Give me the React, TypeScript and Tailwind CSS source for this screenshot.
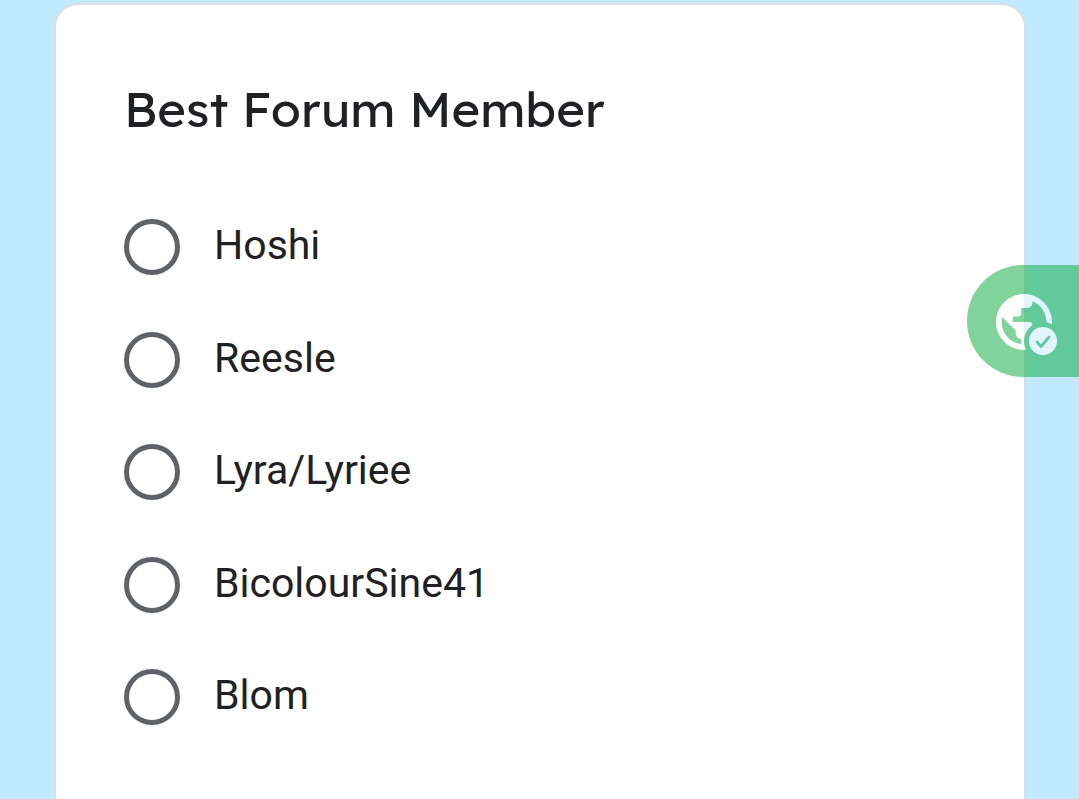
import { useState } from 'react';

const members = ['Hoshi', 'Reesle', 'Lyra/Lyriee', 'BicolourSine41', 'Blom'];

function GlobeCheckIcon() {
  return (
    <svg viewBox="0 0 112 112" className="size-28" aria-hidden="true">
      <mask id="badge-gap">
        <rect width="112" height="112" fill="white" />
        <circle cx="76" cy="76" r="19" fill="black" />
      </mask>
      <g mask="url(#badge-gap)">
        <path
          transform="translate(23.4 23.4) scale(2.8)"
          fill="white"
          d="M12 2C6.48 2 2 6.48 2 12s4.48 10 10 10 10-4.48 10-10S17.52 2 12 2zm-1 17.93c-3.95-.49-7-3.85-7-7.93 0-.62.08-1.21.21-1.79L9 15v1c0 1.1.9 2 2 2v1.93zm6.9-2.54c-.26-.81-1-1.39-1.9-1.39h-1v-3c0-.55-.45-1-1-1H8v-2h2c.55 0 1-.45 1-1V7h2c1.1 0 2-.9 2-2v-.41c2.93 1.19 5 4.06 5 7.41 0 2.08-.8 3.97-2.1 5.39z"
        />
      </g>
      <circle cx="76" cy="76" r="14" fill="white" />
      <path
        d="M70 77l4 4.5 8-9.5"
        fill="none"
        stroke="#14ae46"
        strokeWidth="2.8"
        strokeLinecap="round"
        strokeLinejoin="round"
      />
    </svg>
  );
}

export default function App() {
  const [choice, setChoice] = useState('');

  return (
    <div className="flex h-screen flex-col overflow-hidden bg-[#c1e9ff] pt-[3px] pr-[53px] pl-[54px] text-[#202124]">
      <main className="grow rounded-t-3xl border-2 border-b-0 border-[#d6dfe4] bg-white px-[68px] pt-[72px]">
        <fieldset>
          <legend className="font-[Lexend,Inter,sans-serif] text-[49px] leading-[64px]">
            Best Forum Member
          </legend>
          <div className="mt-[78px] grid h-[506px] content-between">
            {members.map((name) => (
              <label key={name} className="flex h-14 cursor-pointer items-center gap-[34px]">
                <input
                  type="radio"
                  name="member"
                  value={name}
                  checked={choice === name}
                  onChange={() => setChoice(name)}
                  className="size-14 shrink-0 appearance-none rounded-full border-[5px] border-[#5f6368] checked:bg-[#5f6368] checked:bg-clip-content checked:p-2"
                />
                <span className="pb-1 font-[Roboto,sans-serif] text-[41px] leading-[52px]">{name}</span>
              </label>
            ))}
          </div>
        </fieldset>
      </main>
      <button
        type="button"
        aria-label="Site protection"
        className="fixed top-[265px] right-0 size-28 rounded-l-full bg-[#14ae46] opacity-54"
      >
        <GlobeCheckIcon />
      </button>
    </div>
  );
}
